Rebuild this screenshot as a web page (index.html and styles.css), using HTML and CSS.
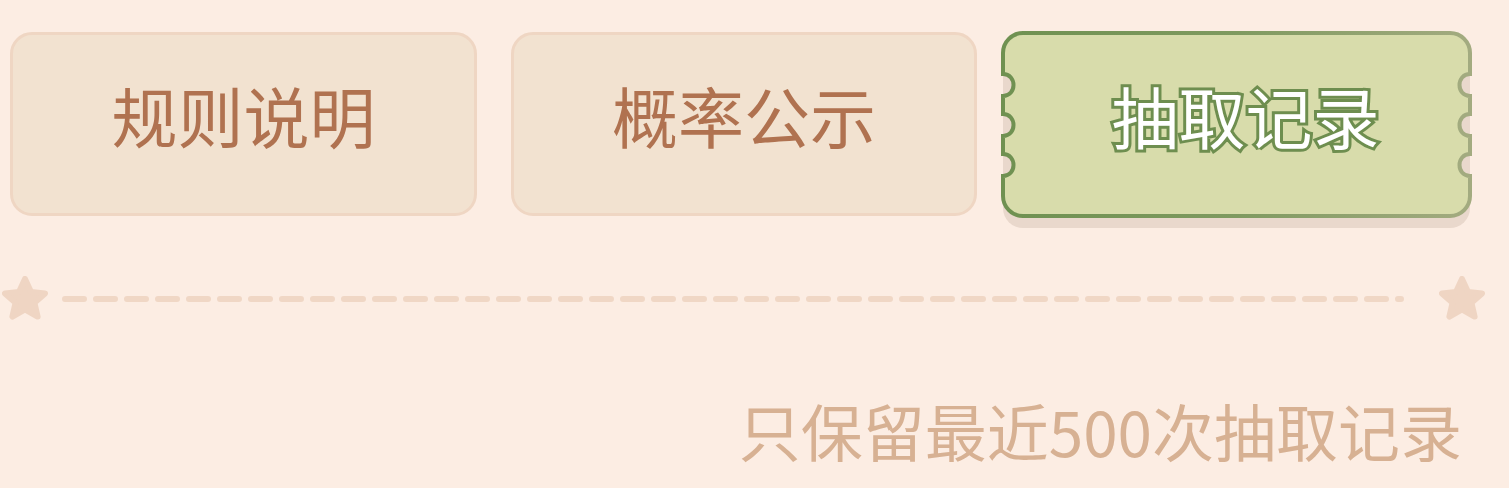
FILE: index.html
```html
<!DOCTYPE html>
<html lang="zh">
<head>
<meta charset="utf-8">
<title>抽取记录</title>
<link rel="stylesheet" href="styles.css">
</head>
<body>
<div class="page">
  <div class="tabs">
    <div class="tab tab-rule"><span class="tab-label">规则说明</span></div>
    <div class="tab tab-prob"><span class="tab-label">概率公示</span></div>
    <div class="tab tab-active">
      <svg class="ticket" viewBox="0 0 471 199" width="471" height="199" aria-hidden="true">
        <defs>
          <linearGradient id="edge" x1="0" y1="0" x2="1" y2="0">
            <stop offset="0" stop-color="#6f9151"/>
            <stop offset="0.5" stop-color="#7f9a60"/>
            <stop offset="1" stop-color="#a3ab80"/>
          </linearGradient>
        </defs>
        <path class="ticket-shadow" d="M22 14 H449 A20 20 0 0 1 469 34 V177 A20 20 0 0 1 449 197 H22 A20 20 0 0 1 2 177 V34 A20 20 0 0 1 22 14 Z"/>
        <path class="ticket-body" stroke="url(#edge)" d="M22 2 H449 A20 20 0 0 1 469 22 V43 C455 43 455 65 469 65 V83 C455 83 455 105 469 105 V123 C455 123 455 145 469 145 V165 A20 20 0 0 1 449 185 H22 A20 20 0 0 1 2 165 V145 C16 145 16 123 2 123 V105 C16 105 16 83 2 83 V65 C16 65 16 43 2 43 V22 A20 20 0 0 1 22 2 Z"/>
      </svg>
      <span class="tab-label tab-label-active">抽取记录</span>
    </div>
  </div>

  <div class="divider">
    <svg class="star" viewBox="0 0 46 46" width="46" height="46" aria-hidden="true">
      <path d="M23 3 L29 16 L43 17.4 L32.4 26.8 L35.6 40.6 L23 33.4 L10.4 40.6 L13.6 26.8 L3 17.4 L17 16 Z"/>
    </svg>
    <svg class="dash" viewBox="0 0 1342 8" width="1342" height="8" aria-hidden="true">
      <line x1="3" y1="4" x2="1339" y2="4"/>
    </svg>
    <svg class="star star-right" viewBox="0 0 46 46" width="46" height="46" aria-hidden="true">
      <path d="M23 3 L29 16 L43 17.4 L32.4 26.8 L35.6 40.6 L23 33.4 L10.4 40.6 L13.6 26.8 L3 17.4 L17 16 Z"/>
    </svg>
  </div>

  <p class="note">只保留最近500次抽取记录</p>
</div>
</body>
</html>
```

FILE: styles.css
```css
html, body {
  margin: 0;
  padding: 0;
}

body {
  width: 1509px;
  height: 488px;
  overflow: hidden;
  background: #fcede3;
  font-family: "Noto Sans CJK SC", "Noto Sans", sans-serif;
}

.page {
  padding: 32px 0 0 10px;
}

.tabs {
  display: flex;
  align-items: flex-start;
}

.tab {
  box-sizing: border-box;
  height: 184px;
  display: flex;
  align-items: center;
  justify-content: center;
  padding-bottom: 20px;
}

.tab-rule,
.tab-prob {
  border: 3px solid #efd6c3;
  background: #f2e2d0;
  border-radius: 22px;
}

.tab-rule {
  width: 467px;
}

.tab-prob {
  width: 466px;
  margin-left: 34px;
}

.tab-label {
  font-size: 66px;
  line-height: 1;
  color: #b07250;
  font-weight: 400;
  letter-spacing: 0;
}

.tab-active {
  position: relative;
  width: 471px;
  height: 187px;
  margin-left: 26px;
  padding-bottom: 22px;
  padding-left: 14px;
}

.ticket {
  position: absolute;
  left: -2px;
  top: -1px;
  overflow: visible;
}

.ticket-shadow {
  fill: #e9d8cc;
}

.ticket-body {
  fill: #d8dcab;
  stroke-width: 4;
}

.tab-label-active {
  position: relative;
  color: #ffffff;
  -webkit-text-stroke: 6px #6e8e4f;
  paint-order: stroke fill;
  font-size: 67px;
}

.divider {
  display: flex;
  align-items: center;
  margin-top: 55px;
  margin-left: -8px;
  height: 50px;
}

.star {
  flex: none;
}

.star path {
  fill: #efd5c3;
  stroke: #efd5c3;
  stroke-width: 6;
  stroke-linejoin: round;
}

.dash {
  flex: none;
  margin-left: 14px;
}

.dash line {
  stroke: #f0d7c5;
  stroke-width: 6;
  stroke-linecap: round;
  stroke-dasharray: 19 12;
}

.star-right {
  margin-left: 35px;
}

.note {
  margin: 75px 0 0 0;
  padding-right: 47px;
  text-align: right;
  font-size: 62px;
  line-height: 1;
  color: #d7b193;
}
```
